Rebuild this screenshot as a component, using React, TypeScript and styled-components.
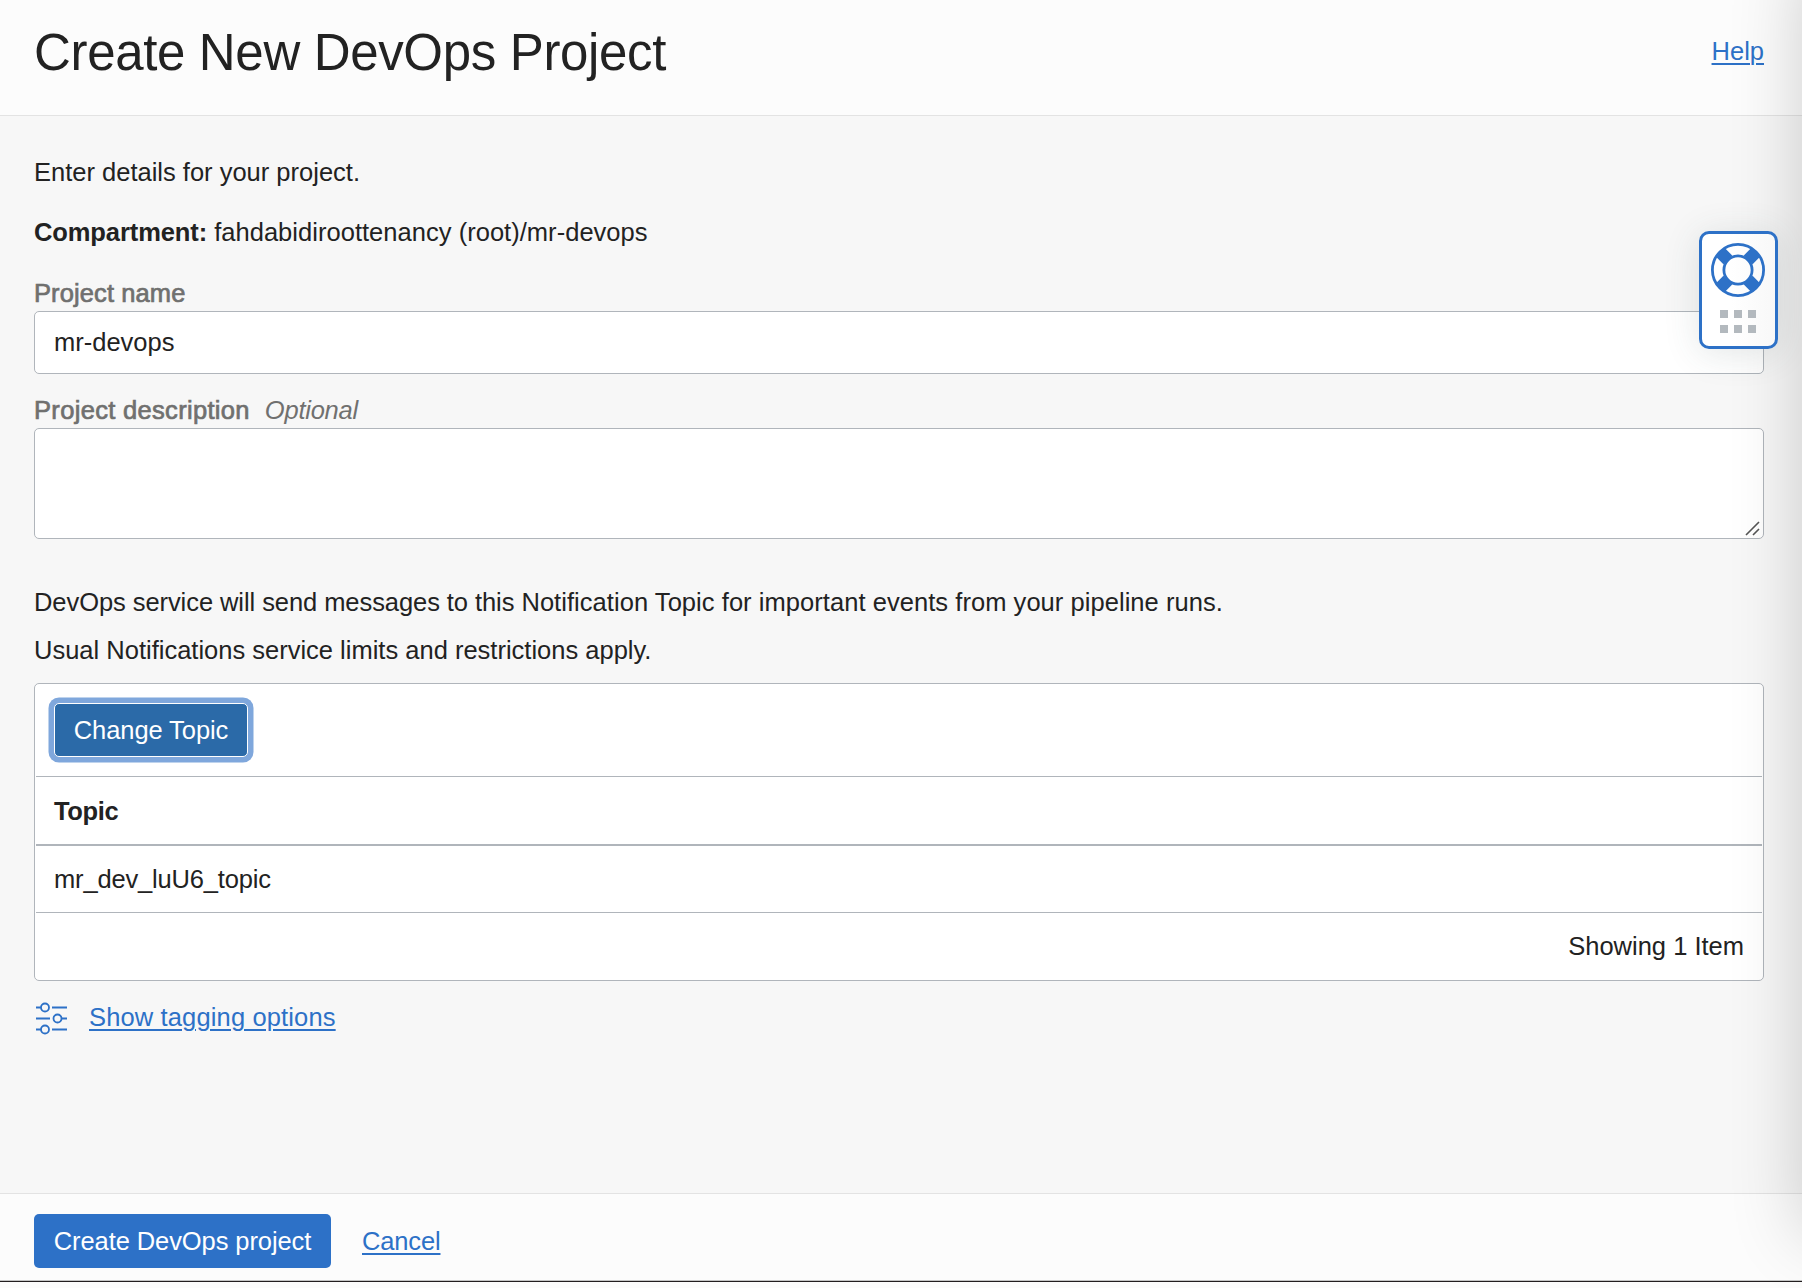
import React from "react";
import styled, { createGlobalStyle } from "styled-components";

const Global = createGlobalStyle`
  * { box-sizing: border-box; }
  html, body { margin: 0; padding: 0; }
  body {
    font-family: "Liberation Sans", Arial, Helvetica, sans-serif;
    font-size: 25.5px;
    line-height: 30px;
    color: #222;
    background: #fcfcfc;
  }
`;

const Page = styled.div`
  position: relative;
  display: flex;
  flex-direction: column;
  width: 1802px;
  height: 1288px;
  overflow: hidden;
`;

const Dialog = styled.div`
  display: flex;
  flex-direction: column;
  height: 1282px;
  border-bottom: 1px solid #231f20;
`;

const Header = styled.header`
  display: flex;
  justify-content: space-between;
  height: 116px;
  padding: 23px 38px 0 34px;
  border-bottom: 1px solid #e3e3e3;
`;

const Title = styled.h1`
  margin: 0;
  font-size: 51px;
  font-weight: 400;
  line-height: 60px;
  letter-spacing: -0.34px;
`;

const Link = styled.a<{ $ls?: number }>`
  color: #2d71c7;
  text-decoration: underline;
  text-decoration-thickness: 2px;
  text-underline-offset: 3px;
  letter-spacing: ${(p) => p.$ls ?? 0}px;
`;

const HelpSlot = styled.div`
  padding-top: 13px;
`;

const Body = styled.main`
  flex: 1;
  display: flex;
  flex-direction: column;
  padding: 41px 38px 0 34px;
  background: #f7f7f7;
`;

const Text = styled.p<{ $gap?: number }>`
  margin: 0 0 ${(p) => p.$gap ?? 0}px;
  white-space: nowrap;
`;

const Spaced = styled.span<{ $ls: number; $bold?: boolean }>`
  letter-spacing: ${(p) => p.$ls}px;
  font-weight: ${(p) => (p.$bold ? 700 : 400)};
`;

const Label = styled.label`
  display: flex;
  height: 30px;
  gap: 15px;
  margin-bottom: 3px;
  color: #70706f;
`;

const LabelText = styled.span<{ $ls?: number }>`
  -webkit-text-stroke: 0.7px #70706f;
  letter-spacing: ${(p) => p.$ls ?? 0}px;
`;

const Optional = styled.em`
  letter-spacing: -0.25px;
`;

const Input = styled.input`
  display: block;
  width: 100%;
  height: 63px;
  margin: 0 0 21px;
  padding: 0 19px;
  border: 1px solid #b0b5bb;
  border-radius: 5px;
  background: #fff;
  color: #222;
  font: inherit;
  outline: none;
`;

const AreaFrame = styled.div`
  display: flex;
  align-items: flex-end;
  justify-content: flex-end;
  height: 111px;
  margin-bottom: 48px;
  padding: 0 3px 2px 0;
  border: 1px solid #b0b5bb;
  border-radius: 5px;
  background: #fff;
`;

const Panel = styled.section`
  display: flex;
  flex-direction: column;
  height: 298px;
  padding: 0 1px;
  border: 1px solid #b0b5bb;
  border-radius: 5px;
  background: #fff;
`;

const PanelRow = styled.div<{ $h: number; $line?: number; $end?: boolean }>`
  display: flex;
  align-items: center;
  justify-content: ${(p) => (p.$end ? "flex-end" : "flex-start")};
  height: ${(p) => p.$h}px;
  padding: 0 18px;
  border-bottom: ${(p) => p.$line ?? 0}px solid #b0b5bb;
`;

const Button = styled.button<{ $focus?: boolean; $w: number; $ls?: number }>`
  width: ${(p) => p.$w}px;
  height: 54px;
  padding: 0;
  border: ${(p) => (p.$focus ? "1px solid #fff" : "0")};
  border-radius: 5px;
  background: ${(p) => (p.$focus ? "#2b6aa8" : "#2d71c7")};
  box-shadow: ${(p) => (p.$focus ? "0 0 0 5.5px #7fa7dc" : "none")};
  color: #fff;
  font: inherit;
  letter-spacing: ${(p) => p.$ls ?? 0}px;
`;

const Tagging = styled.div`
  display: flex;
  align-items: flex-start;
  gap: 21px;
  padding: 21px 0 0 2px;
`;

const Footer = styled.footer`
  display: flex;
  align-items: center;
  gap: 31px;
  height: 88px;
  padding: 7px 34px 0;
  border-top: 1px solid #e3e3e3;
  border-bottom: 1px solid #c4c4c4;
`;

const EdgeShadow = styled.div`
  position: absolute;
  top: -40px;
  left: 1802px;
  width: 200px;
  height: 1275px;
  box-shadow: 0 0 72px rgba(0, 0, 0, 0.19);
  pointer-events: none;
`;

const Support = styled.div`
  position: absolute;
  top: 231px;
  left: 1699px;
  width: 79px;
  height: 118px;
  display: flex;
  flex-direction: column;
  align-items: center;
  padding: 9px 1px 0 0;
  border: 3px solid #2d71c7;
  border-radius: 10px;
  background: linear-gradient(90deg, #fff 40%, #f8f8f8);
  box-shadow: 0 4px 36px rgba(60, 80, 80, 0.14);
`;

const Dots = styled.div`
  display: grid;
  grid-template-columns: repeat(3, 8px);
  gap: 7px 6.4px;
  margin-top: 13px;
`;

const Dot = styled.i`
  width: 8px;
  height: 8px;
  background: #b3b9be;
`;

const Ring = () => (
  <svg width="54" height="54" viewBox="0 0 54 54" fill="none" stroke="#2d71c7">
    <path
      d="M16.8 16.8L9.4 9.4M37.2 16.8L44.6 9.4M16.8 37.2L9.4 44.6M37.2 37.2L44.6 44.6"
      strokeWidth="12.5"
    />
    <circle cx="27" cy="27" r="25.6" strokeWidth="2.8" />
    <circle cx="27" cy="27" r="14.1" strokeWidth="2.8" />
  </svg>
);

const Sliders = () => (
  <svg width="32" height="33" viewBox="0 0 32 33" fill="none" stroke="#2d71c7" strokeWidth="1.8">
    <path d="M0 5.5h5M16 5.5h15M0 16.5h14M25.5 16.5h5.5M0 27.5h5M16 27.5h15" />
    <circle cx="9" cy="5.5" r="4" />
    <circle cx="21.5" cy="16.5" r="4" />
    <circle cx="9" cy="27.5" r="4" />
  </svg>
);

const Grip = () => (
  <svg width="15" height="15" viewBox="0 0 15 15" stroke="#555" strokeWidth="1.6">
    <path d="M1 14L14 1M8 14L14 8" />
  </svg>
);

export default function App() {
  return (
    <Page>
      <Global />
      <Dialog>
        <Header>
          <Title>Create New DevOps Project</Title>
          <HelpSlot>
            <Link>Help</Link>
          </HelpSlot>
        </Header>
        <Body>
          <Text $gap={30}>Enter details for your project.</Text>
          <Text $gap={31}>
            <Spaced $bold $ls={-0.1}>Compartment:</Spaced>{" "}
            <Spaced $ls={0.03}>fahdabidiroottenancy (root)/mr-devops</Spaced>
          </Text>
          <Label>
            <LabelText $ls={0.1}>Project name</LabelText>
          </Label>
          <Input defaultValue="mr-devops" />
          <Label>
            <LabelText $ls={0.32}>Project description</LabelText>
            <Optional>Optional</Optional>
          </Label>
          <AreaFrame>
            <Grip />
          </AreaFrame>
          <Text $gap={18}>
            <Spaced $ls={-0.07}>DevOps service will send messages to this </Spaced>
            <Spaced $ls={0.05}>Notification Topic for important events from your pipeline runs.</Spaced>
          </Text>
          <Text $gap={18}>Usual Notifications service limits and restrictions apply.</Text>
          <Panel>
            <PanelRow $h={93} $line={1}>
              <Button $focus $w={194} $ls={-0.08}>Change Topic</Button>
            </PanelRow>
            <PanelRow $h={69} $line={2}>
              <Spaced $bold $ls={-0.35}>Topic</Spaced>
            </PanelRow>
            <PanelRow $h={67} $line={1}>
              <Spaced $ls={-0.17}>mr_dev_luU6_topic</Spaced>
            </PanelRow>
            <PanelRow $h={66} $end>Showing 1 Item</PanelRow>
          </Panel>
          <Tagging>
            <Sliders />
            <Link $ls={0.14}>Show tagging options</Link>
          </Tagging>
        </Body>
        <Footer>
          <Button $w={297} $ls={-0.09}>Create DevOps project</Button>
          <Link $ls={-0.15}>Cancel</Link>
        </Footer>
      </Dialog>
      <EdgeShadow />
      <Support>
        <Ring />
        <Dots>
          {Array.from({ length: 6 }, (_, i) => (
            <Dot key={i} />
          ))}
        </Dots>
      </Support>
    </Page>
  );
}
